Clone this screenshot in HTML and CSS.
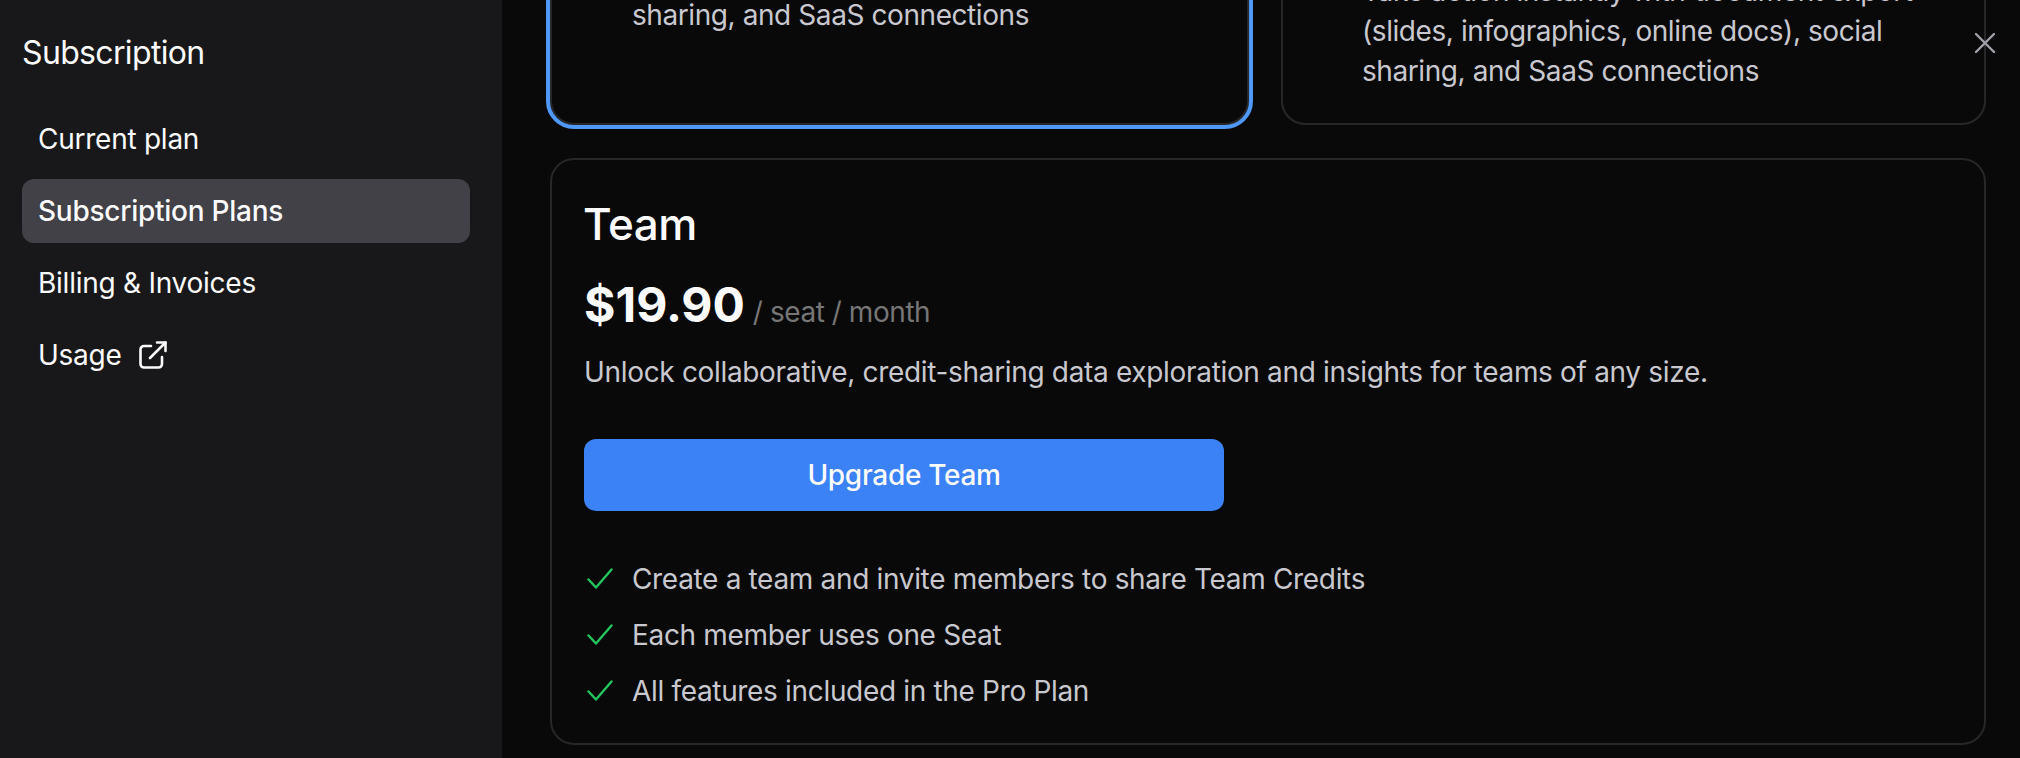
FILE: index.html
```html
<!DOCTYPE html>
<html lang="en">
<head>
    <meta charset="UTF-8">
    <title>Subscription</title>
    <link rel="stylesheet" href="styles.css">
</head>
<body>
    <div class="container">
        <div class="sidebar">
            <h2 class="sidebar-title">Subscription</h2>
            <div class="nav">
                <a class="nav-item">Current plan</a>
                <a class="nav-item active">Subscription Plans</a>
                <a class="nav-item">Billing &amp; Invoices</a>
                <a class="nav-item">Usage
                    <svg class="nav-icon" viewBox="0 0 28 28" fill="none" stroke="currentColor" stroke-width="2.6" stroke-linecap="round" stroke-linejoin="round">
                        <path d="M12 5H5a3.500 3.500 0 0 0-3.500 3.500V23A3.500 3.500 0 0 0 5 26.500h14.500A3.500 3.500 0 0 0 23 23v-7"/>
                        <path d="M11 17 26.500 1.500"/>
                        <path d="M18 1.500h8.500V10"/>
                    </svg>
                </a>
            </div>
        </div>

        <div class="main">
            <div class="plan-row">
                <div class="card selected">
                    <ul class="features">
                        <li class="no-check">Take action instantly with document export (slides, infographics, online docs), social sharing, and SaaS connections</li>
                    </ul>
                </div>
                <div class="card">
                    <ul class="features">
                        <li class="no-check">Take action instantly with document export (slides, infographics, online docs), social sharing, and SaaS connections</li>
                    </ul>
                </div>
            </div>

            <div class="card team">
                <h3 class="plan-name">Team</h3>
                <div class="price-row">
                    <span class="price">$19.90</span>
                    <span class="per">/ seat / month</span>
                </div>
                <p class="plan-desc">Unlock collaborative, credit-sharing data exploration and insights for teams of any size.</p>
                <button class="upgrade">Upgrade Team</button>
                <ul class="features">
                    <li>
                        <svg class="check" viewBox="0 0 26 24" fill="none" stroke="currentColor" stroke-width="2.4" stroke-linecap="round" stroke-linejoin="round"><path d="M1.500 12.500 9 20.500 24.500 2.500"/></svg>
                        Create a team and invite members to share Team Credits
                    </li>
                    <li>
                        <svg class="check" viewBox="0 0 26 24" fill="none" stroke="currentColor" stroke-width="2.4" stroke-linecap="round" stroke-linejoin="round"><path d="M1.500 12.500 9 20.500 24.500 2.500"/></svg>
                        Each member uses one Seat
                    </li>
                    <li>
                        <svg class="check" viewBox="0 0 26 24" fill="none" stroke="currentColor" stroke-width="2.4" stroke-linecap="round" stroke-linejoin="round"><path d="M1.500 12.500 9 20.500 24.500 2.500"/></svg>
                        All features included in the Pro Plan
                    </li>
                </ul>
            </div>
        </div>

        <svg class="close" viewBox="0 0 20 20" fill="none" stroke="currentColor" stroke-width="2.400" stroke-linecap="round"><path d="M1 1 19 19M19 1 1 19"/></svg>
    </div>
</body>
</html>
```

FILE: styles.css
```css
* {
    box-sizing: border-box;
}
html, body {
    margin: 0;
    height: 100%;
    overflow: hidden;
}
body {
    background-color: #09090a;
    color: #fafafa;
    font-family: Inter, "Liberation Sans", sans-serif;
    font-size: 28px;
    line-height: 40px;
}
.container {
    display: flex;
    height: 758px;
    position: relative;
}
.sidebar {
    width: 502px;
    flex-shrink: 0;
    background-color: #18181b;
    padding: 33px 32px 0 22px;
}
.sidebar-title {
    margin: 0 0 34px 0;
    font-size: 32px;
    font-weight: 400;
    letter-spacing: -0.65px;
}
.nav {
    display: flex;
    flex-direction: column;
    gap: 8px;
}
.nav-item {
    display: flex;
    align-items: center;
    height: 64px;
    padding: 0 16px;
    border-radius: 12px;
    letter-spacing: -0.25px;
}
.nav-item.active {
    background-color: #414147;
    font-weight: 500;
}
.nav-icon {
    width: 28px;
    height: 28px;
    margin-left: 17px;
}
.main {
    flex: 1;
    height: 758px;
    overflow: hidden;
    padding: 0 34px 13px 48px;
    display: flex;
    flex-direction: column;
    justify-content: flex-end;
    gap: 33px;
}
.plan-row {
    display: grid;
    grid-template-columns: 699px 705px;
    gap: 32px;
    flex-shrink: 0;
}
.plan-row .card {
    display: flex;
    flex-direction: column;
    justify-content: flex-end;
    padding: 0 32px 32px 79px;
}
.card {
    border: 2px solid #27272a;
    border-radius: 24px;
}
.plan-row .card.selected {
    outline: 4px solid #4f98f5;
    padding: 0 32px 88px 80px;
}
.team {
    padding: 32px;
    flex-shrink: 0;
}
.plan-name {
    margin: 2px 0 0 -1px;
    font-size: 44px;
    line-height: 60px;
    font-weight: 500;
    letter-spacing: -0.4px;
}
.price-row {
    display: flex;
    align-items: baseline;
    gap: 8px;
    margin-top: 21px;
}
.price {
    font-size: 48px;
    line-height: 60px;
    font-weight: 700;
}
.per {
    color: #767676;
    letter-spacing: -0.45px;
}
.plan-desc {
    margin: 17px 0 0 0;
    color: #c8c8ce;
    letter-spacing: -0.33px;
}
.upgrade {
    display: block;
    width: 640px;
    height: 72px;
    margin-top: 47px;
    border: none;
    border-radius: 12px;
    background-color: #3b82f6;
    color: #fafafa;
    font-family: inherit;
    font-size: 28px;
    font-weight: 500;
    letter-spacing: -0.3px;
}
.features {
    list-style: none;
    margin: 48px 0 0 0;
    padding: 0;
    display: flex;
    flex-direction: column;
    gap: 16px;
    color: #c8c8ce;
    letter-spacing: -0.33px;
}
.plan-row .features {
    margin: 0;
    gap: 0;
    letter-spacing: -0.42px;
}
.features li {
    display: flex;
    align-items: center;
    gap: 19px;
}
.features li.no-check {
    display: block;
}
.check {
    width: 26px;
    height: 24px;
    margin-left: 3px;
    color: #22c55e;
    flex-shrink: 0;
}
.close {
    position: absolute;
    top: 33px;
    right: 25px;
    width: 20px;
    height: 20px;
    color: #a1a1aa;
}
```
